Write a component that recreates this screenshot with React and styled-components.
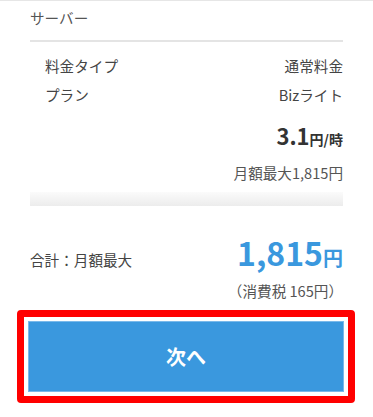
import React from 'react';
import styled, { createGlobalStyle } from 'styled-components';

const GlobalStyle = createGlobalStyle`
  html, body {
    margin: 0;
    padding: 0;
    background: #fff;
  }
  body {
    font-family: "Noto Sans CJK JP", "Noto Sans", sans-serif;
    color: #444;
  }
`;

const Page = styled.div`
  width: 373px;
  height: 417px;
  border-top: 1px solid #e6e6e6;
  box-sizing: border-box;
  overflow: hidden;
`;

const Inner = styled.div`
  padding: 0 30px;
`;

const SectionTitle = styled.div`
  font-size: 14.6px;
  line-height: 20px;
  color: #555;
  padding: 7px 0 12px;
  border-bottom: 2px solid #e4e4e4;
`;

const Rows = styled.div`
  padding: 14px 0 0 15px;
  display: flex;
  flex-direction: column;
  gap: 9px;
`;

const Row = styled.div`
  display: flex;
  justify-content: space-between;
  font-size: 14.6px;
  line-height: 20px;
  color: #444;
`;

const Price = styled.div`
  text-align: right;
  margin-top: 16px;
  font-weight: 700;
  color: #333;
  line-height: 28px;
`;

const Big = styled.span`
  font-size: ${(p) => p.$size}px;
  color: ${(p) => p.$color || 'inherit'};
`;

const Unit = styled.span`
  font-size: ${(p) => p.$size}px;
  color: ${(p) => p.$color || 'inherit'};
`;

const SubNote = styled.div`
  text-align: right;
  font-size: 14.6px;
  line-height: 20px;
  color: #555;
  margin-top: ${(p) => p.$top}px;
`;

const Fade = styled.div`
  height: 14px;
  margin-top: 9px;
  background: linear-gradient(to bottom, #fbfbfb 0%, #ececec 100%);
`;

const Total = styled.div`
  display: flex;
  justify-content: space-between;
  align-items: center;
  margin-top: 28px;
`;

const TotalLabel = styled.div`
  font-size: 14.6px;
  color: #444;
  padding-top: 8px;
`;

const TotalAmount = styled.div`
  font-weight: 700;
  color: #3a98de;
  line-height: 36px;
`;

const Highlight = styled.div`
  margin: 9px 18px 0 17px;
  border: 7px solid #ff0000;
  border-radius: 4px;
  padding: 4px;
`;

const NextButton = styled.button`
  display: block;
  width: 100%;
  height: 71px;
  border: 1px solid #7ab9ea;
  background: #3a98de;
  color: #fff;
  font-family: inherit;
  font-size: 20px;
  font-weight: 700;
  cursor: pointer;
`;

export default function App() {
  return (
    <>
      <GlobalStyle />
      <Page>
        <Inner>
          <SectionTitle>サーバー</SectionTitle>
          <Rows>
            <Row>
              <span>料金タイプ</span>
              <span>通常料金</span>
            </Row>
            <Row>
              <span>プラン</span>
              <span>Bizライト</span>
            </Row>
          </Rows>
          <Price>
            <Big $size={22}>3.1</Big>
            <Unit $size={14}>円/時</Unit>
          </Price>
          <SubNote $top={10}>月額最大1,815円</SubNote>
          <Fade />
          <Total>
            <TotalLabel>合計：月額最大</TotalLabel>
            <TotalAmount>
              <Big $size={32} $color="#3a98de">1,815</Big>
              <Unit $size={20} $color="#3a98de">円</Unit>
            </TotalAmount>
          </Total>
          <SubNote $top={4}>（消費税 165円）</SubNote>
        </Inner>
        <Highlight>
          <NextButton>次へ</NextButton>
        </Highlight>
      </Page>
    </>
  );
}
